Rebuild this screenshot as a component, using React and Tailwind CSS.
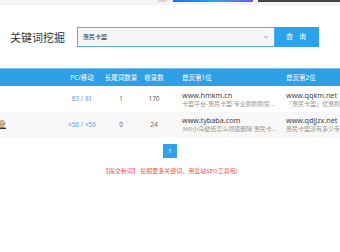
export default function App() {
  const font = { fontFamily: '"Noto Sans", "Noto Sans CJK SC", sans-serif' };
  return (
    <div className="w-[340px] h-[252px] bg-white overflow-hidden relative" style={font}>
      {/* top strip */}
      <div className="h-[5px] bg-[#f4f4f4] flex items-start">
        <div className="ml-[158px] w-[9px] h-[2px] bg-[#d8d8d8]" />
        <div className="ml-[6px] w-[80px] h-[2px] bg-gradient-to-r from-[#1a73e8] via-[#2aa0f0] to-[#6a5ae0]" />
        <div className="ml-[5px] flex-1 h-[2px] bg-[#444]" />
      </div>
      {/* search row */}
      <div className="flex items-center mt-[22px] h-[20px]">
        <div className="ml-[10px] w-[67px] text-[11px] leading-none text-[#333]">关键词挖掘</div>
        <div className="w-[198px] h-[20px] border border-[#5aade3] bg-[#f5f5f5] flex items-center justify-between pl-[5px] pr-[5px]">
          <span className="text-[6px] text-[#333] leading-none">惠民卡盟</span>
          <span className="w-0 h-0 border-l-[3px] border-r-[3px] border-t-[3px] border-l-transparent border-r-transparent border-t-[#ccc]" />
        </div>
        <div className="w-[44px] h-[20px] bg-[#2ea2e8] text-white text-[7px] flex items-center justify-center tracking-[2px]">查 询</div>
      </div>
      {/* table */}
      <div className="mt-[21px] border-t border-[#7cc3f0]">
        <div className="flex h-[17px] bg-[#2f9fe6] text-white text-[6.5px] items-center">
          <div className="w-[64px]" />
          <div className="w-[36px] text-center">PC/移动</div>
          <div className="w-[42px] text-center">长尾词数量</div>
          <div className="w-[24px] text-center">收录数</div>
          <div className="w-[111px] pl-[16px]">首页第1位</div>
          <div className="flex-1 pl-[9px]">首页第2位</div>
        </div>
        <div className="flex h-[26px] bg-white items-center text-[6.5px]">
          <div className="w-[64px]" />
          <div className="w-[36px] text-center text-[#5b9be0]">63 / 81</div>
          <div className="w-[42px] text-center text-[#666]">1</div>
          <div className="w-[24px] text-center text-[#666]">170</div>
          <div className="w-[111px] pl-[16px] whitespace-nowrap overflow-hidden">
            <div className="text-[7.2px] text-[#444] leading-[9px]">www.hmkm.cn</div>
            <div className="text-[6px] text-[#999] leading-[8px]">卡盟平台-惠民卡盟-专业刷刷刷赞...</div>
          </div>
          <div className="flex-1 pl-[9px] whitespace-nowrap overflow-hidden">
            <div className="text-[7.2px] text-[#444] leading-[9px]">www.qqkm.net</div>
            <div className="text-[6px] text-[#999] leading-[8px]">「惠民卡盟」优惠刷钻刷赞</div>
          </div>
        </div>
        <div className="flex h-[25px] bg-[#f7f7f7] items-center text-[6.5px]">
          <div className="w-[64px] relative h-full">
            <span className="absolute left-[-10px] top-[8px] text-[8px] text-[#333] underline leading-none whitespace-nowrap">产业</span>
          </div>
          <div className="w-[36px] text-center text-[#5b9be0]">&lt;50 / &lt;50</div>
          <div className="w-[42px] text-center text-[#666]">0</div>
          <div className="w-[24px] text-center text-[#666]">24</div>
          <div className="w-[111px] pl-[16px] whitespace-nowrap overflow-hidden">
            <div className="text-[7.2px] text-[#444] leading-[9px]">www.tybaba.com</div>
            <div className="text-[6px] text-[#999] leading-[8px]">360小鸟壁纸怎么彻底删除 惠民卡...</div>
          </div>
          <div className="flex-1 pl-[9px] whitespace-nowrap overflow-hidden">
            <div className="text-[7.2px] text-[#444] leading-[9px]">www.qdjjzx.net</div>
            <div className="text-[6px] text-[#999] leading-[8px]">惠民卡盟没有多少专业刷钻</div>
          </div>
        </div>
      </div>
      {/* pagination */}
      <div className="flex justify-center mt-[7px]">
        <div className="w-[14px] h-[14px] bg-[#2ea2e8] text-white text-[6px] flex items-center justify-center">1</div>
      </div>
      <div className="mt-[10px] text-center text-[6px] text-[#f05050] leading-none">
        【提交新词】 挖掘更多关键词，用爱站SEO工具包!
      </div>
    </div>
  );
}
